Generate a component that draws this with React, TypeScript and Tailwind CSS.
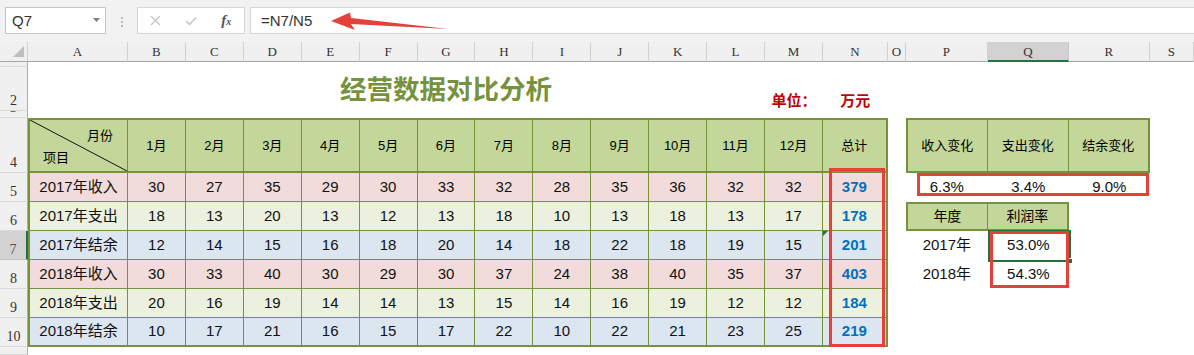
import React from "react";

const data = [
  { label: "2017年收入", vals: [30, 27, 35, 29, 30, 33, 32, 28, 35, 36, 32, 32], total: 379, bg: "bg-[#F2DCDB]" },
  { label: "2017年支出", vals: [18, 13, 20, 13, 12, 13, 18, 10, 13, 18, 13, 17], total: 178, bg: "bg-[#EBF1DE]" },
  { label: "2017年结余", vals: [12, 14, 15, 16, 18, 20, 14, 18, 22, 18, 19, 15], total: 201, bg: "bg-[#DCE6F1]" },
  { label: "2018年收入", vals: [30, 33, 40, 30, 29, 30, 37, 24, 38, 40, 35, 37], total: 403, bg: "bg-[#F2DCDB]" },
  { label: "2018年支出", vals: [20, 16, 19, 14, 14, 13, 15, 14, 16, 19, 12, 12], total: 184, bg: "bg-[#EBF1DE]" },
  { label: "2018年结余", vals: [10, 17, 21, 16, 15, 17, 22, 10, 22, 21, 23, 25], total: 219, bg: "bg-[#DCE6F1]" },
];

const months = ["1月", "2月", "3月", "4月", "5月", "6月", "7月", "8月", "9月", "10月", "11月", "12月"];
const letters = "ABCDEFGHIJKLMNOPQRS".split("");

function RowHdr({ n, sel }: { n: string; sel?: boolean }) {
  return (
    <div
      className={
        sel
          ? "flex items-end justify-center overflow-hidden bg-[#d2d2d2] border-b border-b-[#c4c4c4] border-r-2 border-r-[#217346] text-[#555] text-[14px] leading-none pb-[2px] font-['Liberation_Serif',serif]"
          : "flex items-end justify-center overflow-hidden bg-[#f0f0f0] border-b border-b-[#d9d9d9] border-r border-r-[#ababab] text-[#333] text-[14px] leading-none pb-[2px] font-['Liberation_Serif',serif]"
      }
    >
      {n}
    </div>
  );
}

function ColHdr({ l, sel }: { l: string; sel?: boolean }) {
  return (
    <div
      className={
        sel
          ? "flex items-center justify-center bg-[#d2d2d2] border-r border-r-[#c8c8c8] border-b-2 border-b-[#217346] text-[13px] text-[#333] leading-none font-['Liberation_Serif',serif]"
          : "flex items-center justify-center bg-[#f0f0f0] border-r border-r-[#d0d0d0] border-b border-b-[#a6a6a6] text-[13px] text-[#333] leading-none font-['Liberation_Serif',serif]"
      }
    >
      {l}
    </div>
  );
}

function Toolbar() {
  return (
    <div className="flex items-start h-[42px] bg-[#f2f2f2] pt-[7px] pl-[5px]">
      <div className="flex items-center justify-between w-[101px] h-[27px] bg-white border border-[#c6c6c6] pl-[6px] pr-[5px]">
        <span className="text-[15px] text-[#333] leading-none">Q7</span>
        <svg width="7" height="5" viewBox="0 0 7 5">
          <polygon points="0,0 7,0 3.5,4" fill="#7d7d7d" />
        </svg>
      </div>
      <div className="flex flex-col gap-[2px] ml-[15px] mt-[10px]">
        <span className="w-[2px] h-[2px] bg-[#b8b8b8]" />
        <span className="w-[2px] h-[2px] bg-[#b8b8b8]" />
        <span className="w-[2px] h-[2px] bg-[#b8b8b8]" />
      </div>
      <div className="flex items-center w-[108px] h-[27px] bg-white border border-[#d6d6d6] ml-[14px]">
        <div className="flex w-[36px] justify-center">
          <svg width="11" height="11" viewBox="0 0 11 11">
            <path d="M1 1 L10 10 M10 1 L1 10" stroke="#c4c4c4" strokeWidth="1.3" />
          </svg>
        </div>
        <div className="flex w-[36px] justify-center">
          <svg width="12" height="10" viewBox="0 0 12 10">
            <path d="M1 5 L4.5 8.5 L11 1.5" stroke="#c4c4c4" strokeWidth="1.5" fill="none" />
          </svg>
        </div>
        <div className="flex w-[36px] justify-center">
          <span className="italic font-['Liberation_Serif',serif] text-[15px] font-bold text-[#555] leading-none">
            f<span className="text-[10px]">x</span>
          </span>
        </div>
      </div>
      <div className="flex items-center flex-1 h-[27px] bg-white border-y border-l border-[#d6d6d6] ml-[5px] pl-[10px]">
        <span className="text-[15px] text-[#333] leading-none">=N7/N5</span>
      </div>
    </div>
  );
}

const hdrBg = "bg-[#C4D79B]";

export default function App() {
  return (
    <div className="relative w-[1194px] h-[355px] overflow-hidden bg-white font-['Liberation_Sans','Noto_Sans_CJK_SC',sans-serif]">
      <Toolbar />
      <div className="grid grid-cols-[28px_100px_repeat(12,57.917px)_65px_18px_82px_81px_81px_1fr] grid-rows-[20px_5px_44px_7px_55px_repeat(6,29px)_8px]">
        {/* column headers */}
        <div className="relative bg-[#f0f0f0] border-r border-r-[#d0d0d0] border-b border-b-[#a6a6a6]">
          <svg className="absolute right-[3px] bottom-[4px]" width="11" height="11" viewBox="0 0 11 11">
            <polygon points="11,0 11,11 0,11" fill="#bdbdbd" />
          </svg>
        </div>
        {letters.map((l) => (
          <ColHdr key={l} l={l} sel={l === "Q"} />
        ))}

        {/* row 1 */}
        <RowHdr n="1" />
        <div className="col-span-19" />

        {/* row 2 */}
        <RowHdr n="2" />
        <div className="col-span-12 flex items-start pt-[10px] pl-[312px]">
          <span className="text-[26.5px] leading-[26px] font-bold text-[#76923C] whitespace-nowrap">经营数据对比分析</span>
        </div>
        <div className="flex items-start justify-center pt-[26px]">
          <span className="text-[15px] leading-[15px] font-bold text-[#C00000] whitespace-nowrap">单位：</span>
        </div>
        <div className="flex items-start justify-center pt-[26px]">
          <span className="text-[15px] leading-[15px] font-bold text-[#C00000] whitespace-nowrap">万元</span>
        </div>
        <div className="col-span-5" />

        {/* row 3 */}
        <RowHdr n="3" />
        <div className="col-span-19" />

        {/* row 4 */}
        <RowHdr n="4" />
        <div className={`relative flex flex-col justify-between pt-[9px] pb-[7px] pl-[13px] pr-[14px] border-l-2 border-t-2 border-b-2 border-r border-[#76933C] ${hdrBg}`}>
          <svg className="absolute inset-0 w-full h-full" viewBox="0 0 100 100" preserveAspectRatio="none">
            <line x1="0" y1="0" x2="100" y2="100" stroke="#111" strokeWidth="1" vectorEffect="non-scaling-stroke" />
          </svg>
          <span className="self-end text-[13px] leading-[13px] text-black">月份</span>
          <span className="self-start text-[13px] leading-[13px] text-black">项目</span>
        </div>
        {months.map((m) => (
          <div key={m} className={`flex items-center justify-center border-t-2 border-b-2 border-r border-[#76933C] ${hdrBg} text-[13px] text-black`}>
            {m}
          </div>
        ))}
        <div className={`flex items-center justify-center border-t-2 border-b-2 border-r-2 border-[#76933C] ${hdrBg} text-[13px] text-black`}>总计</div>
        <div />
        <div className={`flex items-center justify-center border-l-2 border-t-2 border-b-2 border-r border-[#76933C] ${hdrBg} text-[13px] text-black`}>收入变化</div>
        <div className={`flex items-center justify-center border-t-2 border-b-2 border-r border-[#76933C] ${hdrBg} text-[13px] text-black`}>支出变化</div>
        <div className={`flex items-center justify-center border-t-2 border-b-2 border-r-2 border-[#76933C] ${hdrBg} text-[13px] text-black`}>结余变化</div>
        <div />

        {/* data rows 5-10 */}
        {data.map((r, i) => {
          const last = i === data.length - 1;
          const bb = last ? "border-b-2" : "border-b";
          return (
            <React.Fragment key={r.label}>
              <RowHdr n={String(i + 5)} sel={i === 2} />
              <div className={`flex items-center justify-center border-l-2 border-r ${bb} border-[#76933C] ${r.bg} text-[15px] text-[#111] whitespace-nowrap`}>
                {r.label}
              </div>
              {r.vals.map((v, j) => (
                <div key={j} className={`flex items-center justify-center border-r ${bb} border-[#76933C] ${r.bg} text-[15px] text-[#111]`}>
                  {v}
                </div>
              ))}
              <div className={`relative flex items-center justify-center border-r-2 ${bb} border-[#76933C] ${r.bg} text-[15px] font-bold text-[#0070C0]`}>
                {i === 2 && (
                  <svg className="absolute left-0 top-0" width="5" height="5" viewBox="0 0 5 5">
                    <polygon points="0,0 5,0 0,5" fill="#217346" />
                  </svg>
                )}
                {r.total}
              </div>
              <div />
              {i === 0 && (
                <>
                  <div className="flex items-center justify-center text-[15px] text-[#111]">6.3%</div>
                  <div className="flex items-center justify-center text-[15px] text-[#111]">3.4%</div>
                  <div className="flex items-center justify-center text-[15px] text-[#111]">9.0%</div>
                </>
              )}
              {i === 1 && (
                <>
                  <div className={`flex items-center justify-center border-l-2 border-t-2 border-b-2 border-r border-[#76933C] ${hdrBg} text-[14px] text-black`}>年度</div>
                  <div className={`flex items-center justify-center border-t-2 border-b-2 border-r-2 border-[#76933C] ${hdrBg} text-[14px] text-black`}>利润率</div>
                  <div />
                </>
              )}
              {i === 2 && (
                <>
                  <div className="flex items-center justify-center text-[15px] text-[#111]">2017年</div>
                  <div className="flex items-center justify-center text-[15px] text-[#111]">53.0%</div>
                  <div />
                </>
              )}
              {i === 3 && (
                <>
                  <div className="flex items-center justify-center text-[15px] text-[#111]">2018年</div>
                  <div className="flex items-center justify-center text-[15px] text-[#111]">54.3%</div>
                  <div />
                </>
              )}
              {i > 3 && (
                <>
                  <div />
                  <div />
                  <div />
                </>
              )}
              <div />
            </React.Fragment>
          );
        })}

        {/* row 11 */}
        <RowHdr n="" />
        <div className="col-span-19" />
      </div>

      {/* selection of Q7 */}
      <div className="absolute left-[988px] top-[230px] w-[83px] h-[32px] border-2 border-[#217346]" />
      <div className="absolute left-[1067px] top-[258px] w-[6px] h-[6px] bg-[#217346] border border-white" />

      {/* red annotation boxes */}
      <div className="absolute left-[829px] top-[168px] w-[56px] h-[179px] border-[3px] border-[#E5403A]" />
      <div className="absolute left-[917px] top-[173px] w-[232px] h-[23px] border-[3px] border-[#E5403A]" />
      <div className="absolute left-[990px] top-[231px] w-[79px] h-[57px] border-[3px] border-[#E5403A]" />

      {/* red arrow */}
      <svg className="absolute left-[325px] top-[8px]" width="130" height="30" viewBox="325 8 130 30">
        <polygon points="331,21 350,12.5 351,18 448,29 351,24 355,30" fill="#E5403A" />
      </svg>
    </div>
  );
}
